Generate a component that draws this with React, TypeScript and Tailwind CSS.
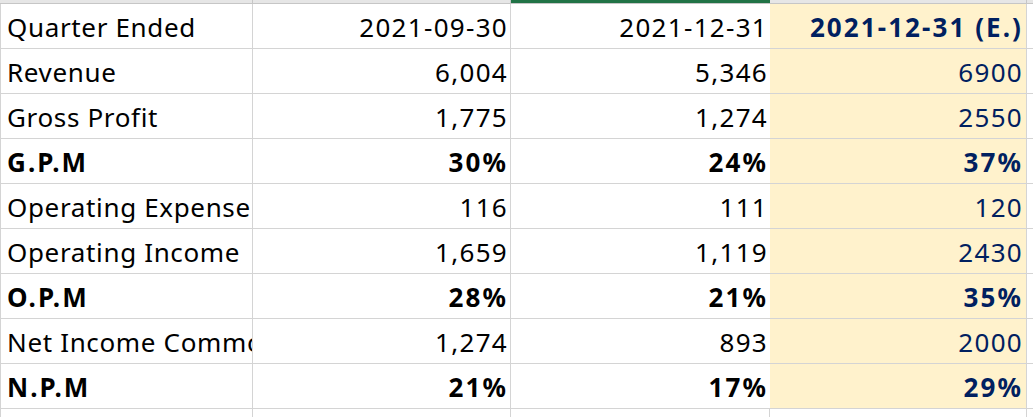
import React from "react";

interface Row {
  label: string;
  prev: string;
  curr: string;
  est: string;
  bold?: boolean;
  estBold?: boolean;
}

const rows: Row[] = [
  { label: "Quarter Ended", prev: "2021-09-30", curr: "2021-12-31", est: "2021-12-31 (E.)", estBold: true },
  { label: "Revenue", prev: "6,004", curr: "5,346", est: "6900" },
  { label: "Gross Profit", prev: "1,775", curr: "1,274", est: "2550" },
  { label: "G.P.M", prev: "30%", curr: "24%", est: "37%", bold: true, estBold: true },
  { label: "Operating Expense", prev: "116", curr: "111", est: "120" },
  { label: "Operating Income", prev: "1,659", curr: "1,119", est: "2430" },
  { label: "O.P.M", prev: "28%", curr: "21%", est: "35%", bold: true, estBold: true },
  { label: "Net Income Common", prev: "1,274", curr: "893", est: "2000" },
  { label: "N.P.M", prev: "21%", curr: "17%", est: "29%", bold: true, estBold: true },
];

const cols = "grid grid-cols-[1px_252px_258px_259px_257px_1fr]";

const weight = (bold?: boolean) => (bold ? "font-bold tracking-[0.08em]" : "tracking-[0.05em]");

export default function App() {
  return (
    <div
      className="w-[1033px] h-[417px] overflow-hidden bg-white text-[26px] text-black"
      style={{ fontFamily: '"Noto Sans", "Open Sans", sans-serif' }}
    >
      {/* column header edge */}
      <div className={`${cols} h-[4px] bg-[#e6e6e6] border-b border-[#c6c6c6]`}>
        <div />
        <div className="border-r border-[#c6c6c6]" />
        <div className="border-r border-[#c6c6c6]" />
        <div className="h-[3px] bg-[#217346]" />
        <div className="border-r border-[#c6c6c6]" />
        <div />
      </div>

      {rows.map((r) => (
        <div key={r.label} className={`${cols} h-[45px] border-b border-[#d4d4d4]`}>
          <div className="bg-[#d4d4d4]" />
          <div
            className={`flex items-center pl-[6px] pt-[3px] overflow-hidden whitespace-nowrap border-r border-[#d4d4d4] ${
              r.bold ? "font-bold tracking-[0.08em]" : "tracking-[0.025em]"
            }`}
          >
            {r.label}
          </div>
          <div
            className={`flex items-center justify-end pr-[2px] pt-[3px] border-r border-[#d4d4d4] ${weight(r.bold)}`}
          >
            {r.prev}
          </div>
          <div className={`flex items-center justify-end pr-[2px] pt-[3px] ${weight(r.bold)}`}>{r.curr}</div>
          <div
            className={`flex items-center justify-end pr-[3px] pt-[3px] bg-[#fff2cc] text-[#002060] border-r border-[#d4d4d4] ${weight(
              r.estBold
            )}`}
          >
            {r.est}
          </div>
          <div />
        </div>
      ))}

      <div className={`${cols} h-[9px]`}>
        <div className="bg-[#d4d4d4]" />
        <div className="border-r border-[#d4d4d4]" />
        <div className="border-r border-[#d4d4d4]" />
        <div className="border-r border-[#d4d4d4]" />
        <div className="border-r border-[#d4d4d4]" />
        <div />
      </div>
    </div>
  );
}
